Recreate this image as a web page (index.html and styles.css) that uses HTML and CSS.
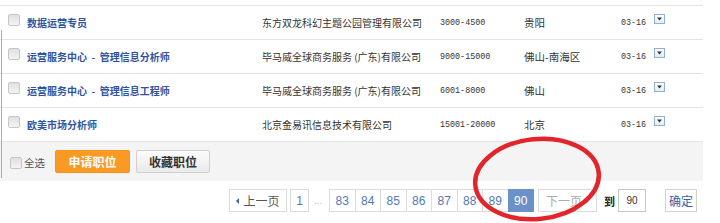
FILE: index.html
```html
<!DOCTYPE html>
<html lang="zh-CN">
<head>
<meta charset="utf-8">
<title>职位列表</title>
<link rel="stylesheet" href="styles.css">
</head>
<body>
<div class="page">
  <div class="list">
    <div class="row">
      <span class="cb"></span>
      <a class="title">数据运营专员</a>
      <span class="company">东方双龙科幻主题公园管理有限公司</span>
      <span class="num">3000-4500</span>
      <span class="city">贵阳</span>
      <span class="num">03-16</span>
      <span class="drop"><svg width="11" height="10" viewBox="0 0 11 10"><path d="M3 3.5h5l-2.5 3z" fill="#333"/></svg></span>
    </div>
    <div class="row">
      <span class="cb"></span>
      <a class="title">运营服务中心 &nbsp;-&nbsp; 管理信息分析师</a>
      <span class="company">毕马威全球商务服务 (广东)有限公司</span>
      <span class="num">9000-15000</span>
      <span class="city">佛山-南海区</span>
      <span class="num">03-16</span>
      <span class="drop"><svg width="11" height="10" viewBox="0 0 11 10"><path d="M3 3.5h5l-2.5 3z" fill="#333"/></svg></span>
    </div>
    <div class="row">
      <span class="cb"></span>
      <a class="title">运营服务中心 &nbsp;-&nbsp; 管理信息工程师</a>
      <span class="company">毕马威全球商务服务 (广东)有限公司</span>
      <span class="num">6001-8000</span>
      <span class="city">佛山</span>
      <span class="num">03-16</span>
      <span class="drop"><svg width="11" height="10" viewBox="0 0 11 10"><path d="M3 3.5h5l-2.5 3z" fill="#333"/></svg></span>
    </div>
    <div class="row">
      <span class="cb"></span>
      <a class="title">欧美市场分析师</a>
      <span class="company">北京金易讯信息技术有限公司</span>
      <span class="num">15001-20000</span>
      <span class="city">北京</span>
      <span class="num">03-16</span>
      <span class="drop"><svg width="11" height="10" viewBox="0 0 11 10"><path d="M3 3.5h5l-2.5 3z" fill="#333"/></svg></span>
    </div>
  </div>
  <div class="footer">
    <span class="cb cb-all"></span>
    <span class="all-label">全选</span>
    <button class="btn-apply">申请职位</button>
    <button class="btn-fav">收藏职位</button>
  </div>
  <div class="pager">
    <a class="pg prev"><span class="tri-l"></span>上一页</a>
    <a class="pg one">1</a>
    <span class="dots">...</span>
    <div class="nums">
      <a class="pg n">83</a>
      <a class="pg n">84</a>
      <a class="pg n">85</a>
      <a class="pg n">86</a>
      <a class="pg n">87</a>
      <a class="pg n">88</a>
      <a class="pg n">89</a>
      <a class="pg n cur">90</a>
    </div>
    <a class="pg next">下一页<span class="tri-r"></span></a>
    <span class="to">到</span>
    <span class="goto">90</span>
    <a class="pg ok">确定</a>
  </div>
  <span class="edge"></span>
  <svg class="mark" width="720" height="223" viewBox="0 0 720 223">
    <ellipse cx="537" cy="179" rx="62" ry="40" transform="rotate(-6 537 179)" fill="none" stroke="#e3242b" stroke-width="4.5"/>
  </svg>
</div>
</body>
</html>
```

FILE: styles.css
```css
* { box-sizing: border-box; }
html, body { margin: 0; padding: 0; background: #fff; }
body {
  font-family: "Noto Sans CJK SC", "Liberation Sans", sans-serif;
  font-size: 10px;
  color: #333;
}
.page {
  position: relative;
  width: 720px;
  height: 223px;
  overflow: hidden;
}
.list {
  margin-top: 5px;
  width: 703px;
  border-top: 1px solid #e4e4e4;
}
.row {
  display: grid;
  grid-template-columns: 19px 235px 178px 84px 97px 33px 12px;
  align-items: center;
  padding-left: 8px;
  height: 34px;
  border-bottom: 1px solid #e4e4e4;
}
.cb {
  display: block;
  width: 12px;
  height: 12px;
  border: 1px solid #c6c6c6;
  border-radius: 2px;
  background: linear-gradient(#e0e0e0, #f3f3f3);
}
.row .cb { align-self: start; margin-top: 8px; }
.title {
  color: #2f53a0;
  font-weight: bold;
  white-space: nowrap;
}
.company { color: #333; white-space: nowrap; }
.num {
  font-family: "Liberation Mono", "DejaVu Sans Mono", monospace;
  font-size: 8.4px;
  color: #333;
}
.city { color: #333; font-size: 10.5px; }
.drop {
  align-self: start;
  margin-top: 8px;
  display: block;
  width: 11px;
  height: 10px;
  border: 1px solid #8fb0d9;
  background: linear-gradient(#ffffff, #e4ecf6);
  line-height: 0;
}
.drop svg { margin: -1px 0 0 -1px; }

.footer {
  display: flex;
  align-items: center;
  width: 703px;
  height: 39px;
  background: #f4f4f4;
  padding-left: 10px;
}
.cb-all { width: 12px; height: 12px; margin-top: 3px; }
.all-label {
  margin-left: 2px;
  font-size: 10.5px;
  color: #555;
  margin-top: 2px;
}
.btn-apply, .btn-fav {
  font-family: "Noto Sans CJK SC", sans-serif;
  font-size: 12px;
  font-weight: bold;
  height: 23px;
  padding: 0;
  line-height: 21px;
  border-radius: 2px;
}
.btn-apply {
  margin-left: 10px;
  width: 75px;
  background: #f99a25;
  border: 1px solid #f7931a;
  color: #fff;
}
.btn-fav {
  margin-left: 6px;
  width: 74px;
  background: linear-gradient(#fbfbfb, #eaeaea);
  border: 1px solid #cfcfcf;
  color: #333;
}

.pager {
  display: flex;
  align-items: center;
  height: 23px;
  margin-top: 8px;
  padding-left: 229px;
  font-family: "Liberation Sans", "Noto Sans CJK SC", sans-serif;
  font-size: 12px;
}
.pg {
  display: flex;
  align-items: center;
  justify-content: center;
  height: 23px;
  border: 1px solid #dcdcdc;
  background: #fff;
  color: #5578b5;
}
.prev {
  width: 58px;
  color: #555;
  font-family: "Noto Sans CJK SC", sans-serif;
}
.tri-l {
  width: 0; height: 0;
  border-top: 3px solid transparent;
  border-bottom: 3px solid transparent;
  border-right: 3px solid #3e62a8;
  margin-right: 4px;
}
.one { width: 19px; margin-left: 3px; color: #5578b5; }
.dots {
  color: #bbb;
  margin: 0 5px;
  font-size: 10px;
  width: 10px;
}
.nums { display: flex; }
.n { width: 26.5px; margin-left: -1px; }
.n:first-child { margin-left: 0; }
.cur {
  background: #6c91c8;
  border-color: #6c91c8;
  color: #fff;
  position: relative;
}
.next {
  width: 59px;
  margin-left: 4px;
  color: #aaa;
  font-family: "Noto Sans CJK SC", sans-serif;
}
.tri-r {
  width: 0; height: 0;
  border-top: 3px solid transparent;
  border-bottom: 3px solid transparent;
  border-left: 3px solid #9ab0d6;
  margin-left: 4px;
}
.to {
  margin-left: 7px;
  font-family: "Noto Sans CJK SC", sans-serif;
  font-weight: bold;
  color: #222;
  font-size: 11px;
}
.goto {
  margin-left: 3px;
  width: 28px;
  height: 23px;
  border: 1px solid #c8c8c8;
  display: flex;
  align-items: center;
  justify-content: center;
  font-size: 10px;
  color: #333;
}
.ok {
  margin-left: 19px;
  width: 32px;
  color: #3a5ea8;
  font-family: "Noto Sans CJK SC", sans-serif;
  border-color: #d0d0d0;
}

.edge {
  position: absolute;
  left: 1px;
  top: 30px;
  width: 1px;
  height: 148px;
  background: #6fbde9;
}
.mark {
  position: absolute;
  left: 0;
  top: 0;
  pointer-events: none;
}
```
